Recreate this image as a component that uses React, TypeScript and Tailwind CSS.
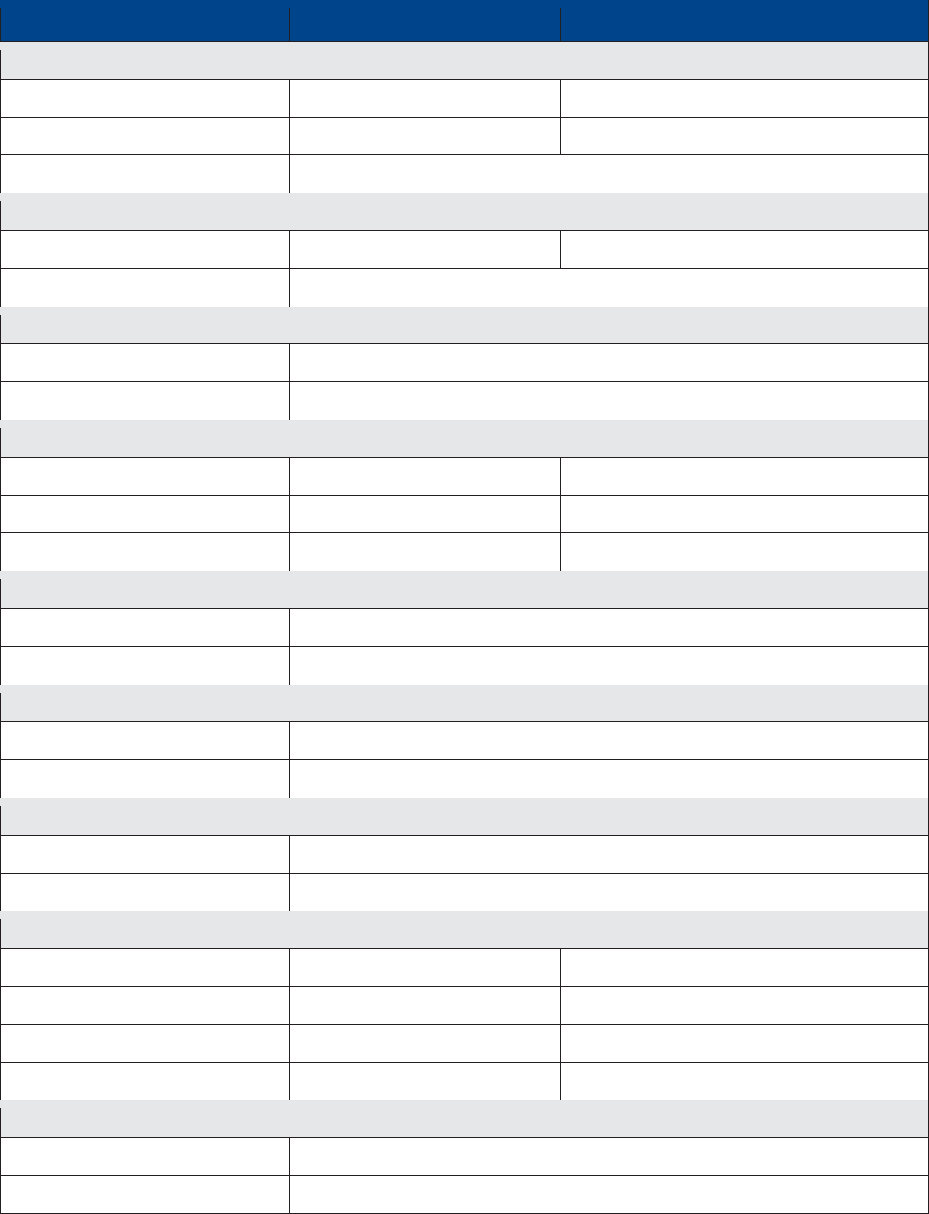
type Row = "section" | "three" | "span";

// empty spec sheet layout: section bands + 3-col or 2-col rows
const rows: Row[] = [
  "section", "three", "three", "span",
  "section", "three", "span",
  "section", "span", "span",
  "section", "three", "three", "three",
  "section", "span", "span",
  "section", "span", "span",
  "section", "span", "span",
  "section", "three", "three", "three", "three",
  "section", "span", "span",
];

export default function App() {
  return (
    <div className="w-[929px] min-h-screen bg-white">
      <div className="border-r border-[#231f20]">
        {/* Header */}
        <div className="grid grid-cols-[290px_271px_1fr] h-[42px] bg-[#00458b] border-b border-[#231f20]">
          <div className="pt-2">
            <div className="h-full border-l border-r border-[#231f20]" />
          </div>
          <div className="pt-2">
            <div className="h-full border-r border-[#231f20]" />
          </div>
          <div />
        </div>

        {/* Body */}
        {rows.map((row, i) => {
          const next = rows[i + 1];
          const bottom = next === "section" ? "" : "border-b";
          if (row === "section") {
            return (
              <div key={i} className="h-[37.8px] bg-[#e6e7e8] border-b border-[#231f20] pt-2">
                <div className="h-full border-l border-[#231f20]" />
              </div>
            );
          }
          if (row === "three") {
            return (
              <div key={i} className={`grid grid-cols-[290px_271px_1fr] h-[37.8px] ${bottom} border-[#231f20]`}>
                <div className="border-l border-r border-[#231f20]" />
                <div className="border-r border-[#231f20]" />
                <div />
              </div>
            );
          }
          return (
            <div key={i} className={`grid grid-cols-[290px_1fr] h-[37.8px] ${bottom} border-[#231f20]`}>
              <div className="border-l border-r border-[#231f20]" />
              <div />
            </div>
          );
        })}
      </div>
    </div>
  );
}
